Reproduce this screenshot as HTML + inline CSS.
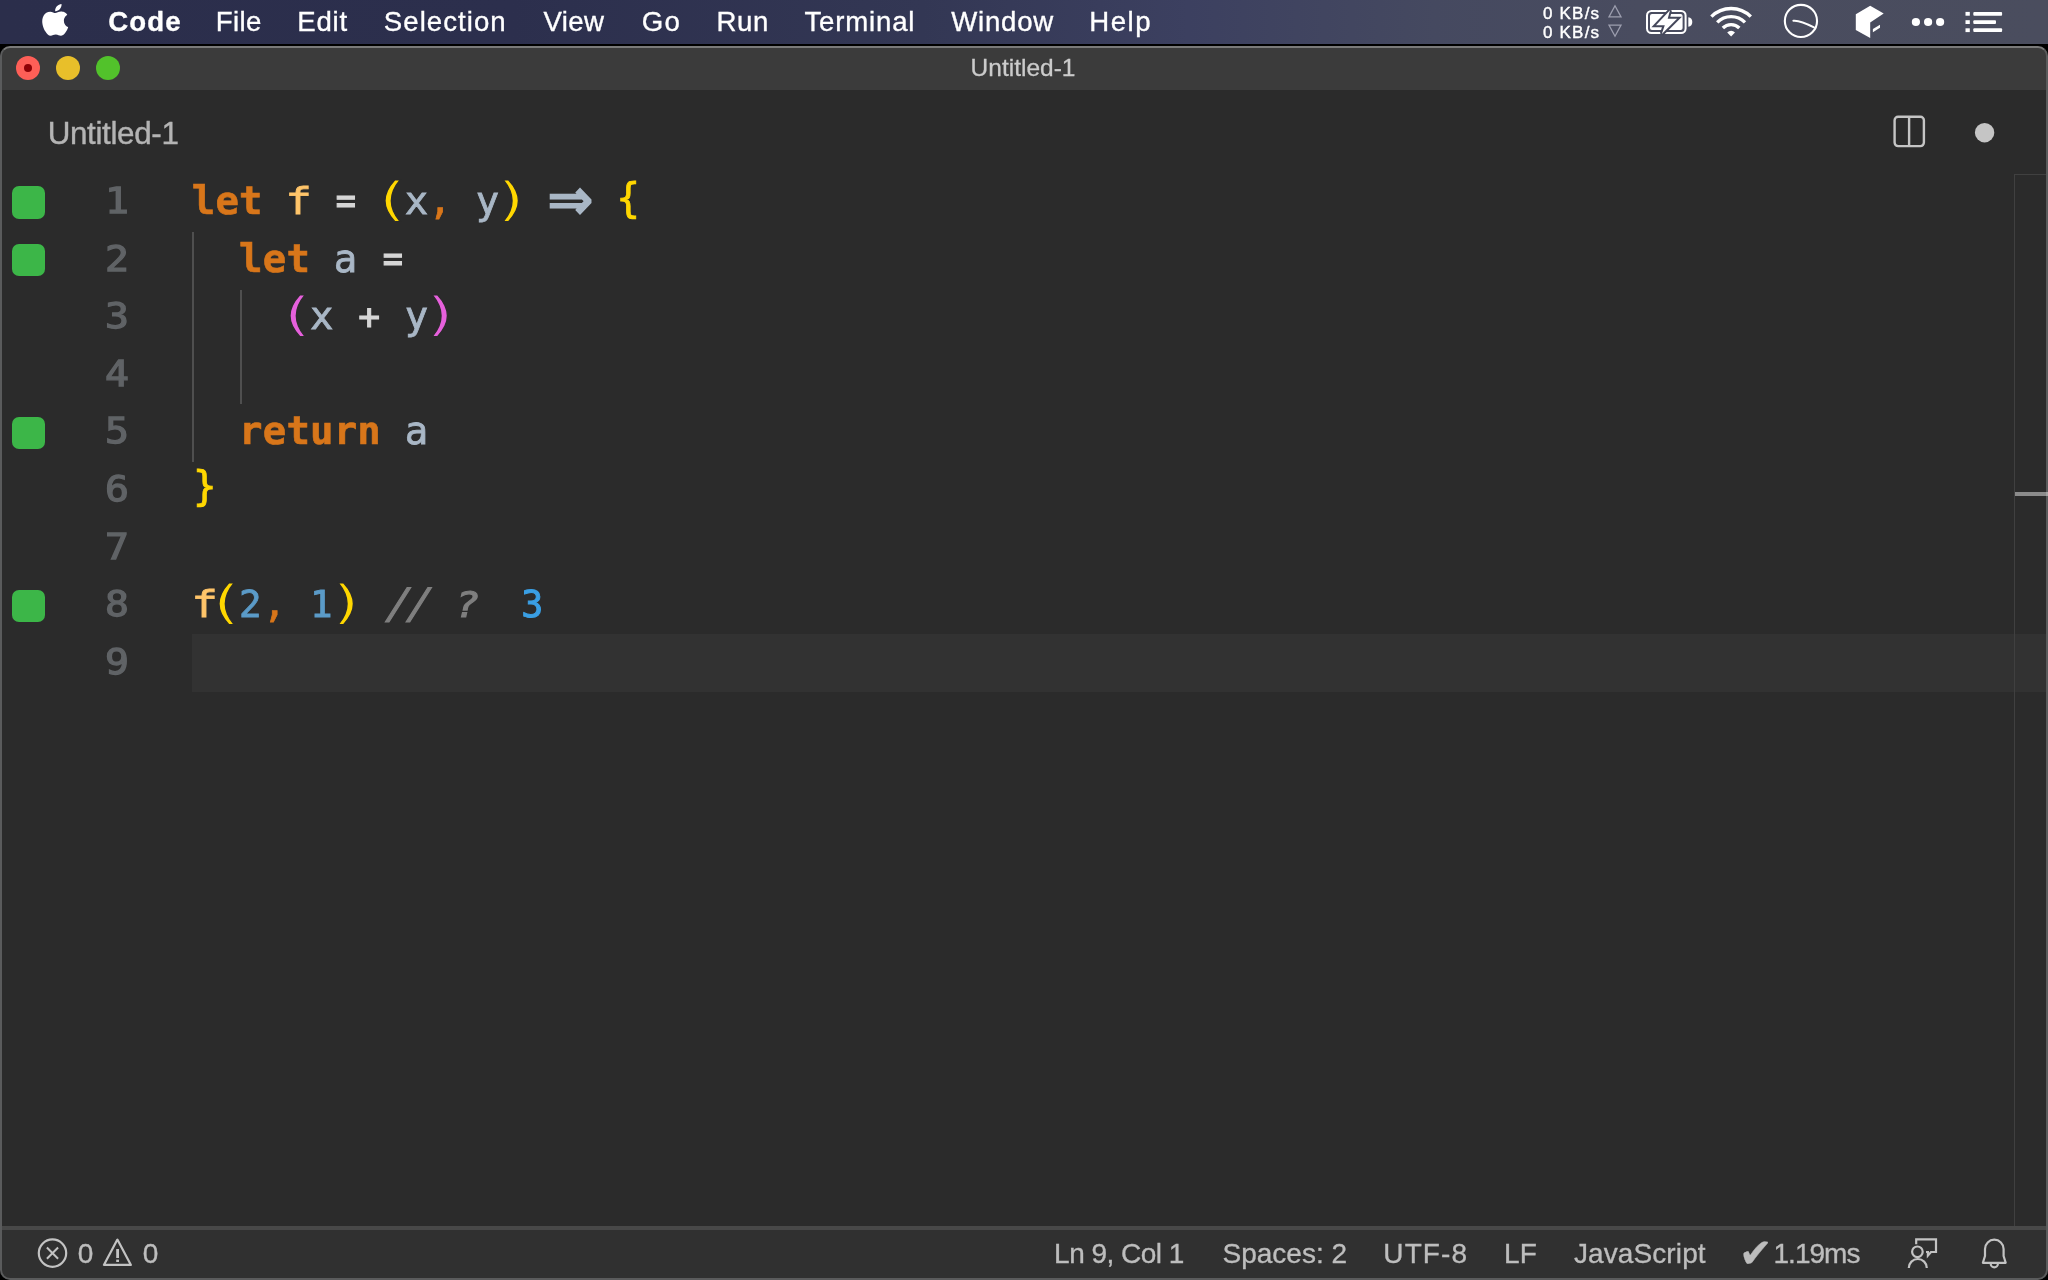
<!DOCTYPE html>
<html lang="en">
<head>
<meta charset="utf-8">
<title>Untitled-1</title>
<style>
*{box-sizing:border-box;margin:0;padding:0}
html,body{width:2048px;height:1280px;overflow:hidden;background:#000}
body{position:relative;font-family:"Liberation Sans",sans-serif;color:#fff}
svg{position:absolute;left:0;top:0;overflow:visible}
/* ---------- menu bar ---------- */
#menubar{will-change:transform;position:absolute;left:0;top:0;width:2048px;height:44px;
  background:linear-gradient(90deg,#2b2e4b 0%,#2c2f4d 25%,#333754 45%,#3c4060 58%,#454960 70%,#494c5f 80%,#4a4d5e 100%)}
#menubar .mi{position:absolute;top:0;height:44px;line-height:44px;font-size:27.6px;color:#fff;white-space:pre;-webkit-text-stroke:0.35px #fff}
#menubar .mi.b{font-weight:bold}
.net{position:absolute;left:1543px;font-size:17px;letter-spacing:1.2px;-webkit-text-stroke:0.4px #fff;line-height:20px;height:20px;color:#fff;white-space:pre}
/* ---------- window ---------- */
#win{position:absolute;left:0;top:46px;width:2048px;height:1234px;background:#2b2b2b;border-radius:10px;overflow:hidden}
#pg{will-change:transform;position:absolute;left:0;top:-46px;width:2048px;height:1280px}
#frame{position:absolute;left:0;top:0;width:2048px;height:1234px;border:2px solid #5a5b5c;border-top-color:#7a7a7a;border-radius:10px}
#titlebar{position:absolute;left:0;top:46px;width:2048px;height:44px;background:#3b3b3b}
#title{position:absolute;left:0;width:2046px;top:46px;height:43px;line-height:43px;text-align:center;font-size:24.5px;color:#cbcbcb;-webkit-text-stroke:0.3px #cbcbcb}
.tl{position:absolute;top:56px;width:24px;height:24px;border-radius:50%}
/* ---------- tab ---------- */
#tab{position:absolute;left:47.7px;top:109.9px;height:48px;line-height:48px;font-size:31.4px;letter-spacing:-0.35px;color:#b4b4b4;white-space:pre;-webkit-text-stroke:0.4px #b4b4b4}
/* ---------- editor ---------- */
.sq{position:absolute;left:12.3px;width:32.5px;height:32.4px;border-radius:7px;background:#3cb648}
.ln{position:absolute;left:60px;width:69px;transform:scaleX(1.1);transform-origin:100% 50%;text-align:right;height:57.6px;line-height:57.6px;margin-top:-1.8px;
  font-family:"DejaVu Sans Mono","Liberation Mono",monospace;font-size:36.2px;color:#606366;-webkit-text-stroke:1.3px #606366}
.code{position:absolute;left:191.8px;height:57.6px;line-height:57.6px;white-space:pre;margin-top:-1.8px;
  font-family:"DejaVu Sans Mono","Liberation Mono",monospace;font-size:39px;letter-spacing:0.17px;color:#a9b7c6;-webkit-text-stroke:0.8px}
.k{color:#d8761a;font-weight:bold;-webkit-text-stroke:0.6px}
.fn{color:#ffc56a;display:inline-block;transform:scale(1.12,0.955);transform-origin:15% 71.5%}
.op{color:#d6d6d6;display:inline-block;transform:translateY(-0.3px) scale(0.86,1);-webkit-text-stroke:1.2px}
.pls{color:#d6d6d6;display:inline-block;transform:translate(0.5px,0.6px) scale(0.93,0.93);-webkit-text-stroke:1.2px}
.y{color:#ffd700}
.p{color:#e660dc}
.pl,.pr{display:inline-block;transform-origin:50% 50%;-webkit-text-stroke:0.8px #2b2b2b}
.pl{transform:translate(-1.6px,-1.2px) scale(1.72,1.19)}
.pr{transform:translate(1.4px,-1.2px) scale(1.72,1.19)}
.br{display:inline-block;transform-origin:50% 50%;transform:translate(-0.8px,-1.9px) scale(1,1.03)}
.br2{display:inline-block;transform-origin:50% 50%;transform:translate(1.3px,-1.9px) scale(1,1.03)}
.c{color:#d8761a}
.n{color:#5b9bc8;font-size:37.5px;letter-spacing:1.07px}
.cm{color:#7f7f7f;font-style:italic}
.sl{display:inline-block;margin-left:5.8px;letter-spacing:-2.8px;margin-right:3.2px;transform:skewX(-9deg) scaleY(1.07);transform-origin:50% 60%;-webkit-text-stroke:1.2px}
.q{display:inline-block;transform:translateX(0.5px) scale(1.04,0.92);transform-origin:50% 71.5%;-webkit-text-stroke:1.3px}
.r{color:#3a9fe4;margin-left:42.5px;font-size:36.6px;letter-spacing:1.07px;-webkit-text-stroke:1px}
.arw{display:inline-block;width:47.13px;height:40px;vertical-align:baseline;position:relative}
.arwi{position:absolute;left:1.2px;top:6.4px;font-family:"DejaVu Sans",sans-serif;font-size:54px;letter-spacing:0;-webkit-text-stroke:2.2px;line-height:40px;transform-origin:50% 50%;transform:scaleY(1.05)}
.guide{position:absolute;width:2px;background:#4f4f4f}
#curline{position:absolute;left:192px;top:634px;width:1854px;height:58px;background:#323232}
#rulerL{position:absolute;left:2014px;top:174px;width:1px;height:1053px;background:#404040}
#rulerT{position:absolute;left:2014px;top:174px;width:32px;height:1px;background:#404040}
#rmark{position:absolute;left:2015px;top:492px;width:33px;height:4px;background:#8b8b8b}
/* ---------- status bar ---------- */
#status{position:absolute;left:0;top:1226px;width:2048px;height:54px;background:#303030;border-top:4px solid #484848}
.si{position:absolute;top:1228.4px;height:51px;line-height:51px;font-size:28px;letter-spacing:-0.4px;color:#bdbdbd;white-space:pre;-webkit-text-stroke:0.35px #bdbdbd}
</style>
</head>
<body>
<div id="menubar">
  <svg width="2048" height="44" viewBox="0 0 2048 44">
    <!-- apple -->
    <g transform="translate(39.3,3.9) scale(1.325)" fill="#fff"><path d="M12.152 6.896c-.948 0-2.415-1.078-3.96-1.04-2.04.027-3.91 1.183-4.961 3.014-2.117 3.675-.546 9.103 1.519 12.09 1.013 1.454 2.208 3.09 3.792 3.039 1.52-.065 2.09-.987 3.935-.987 1.831 0 2.35.987 3.96.948 1.637-.026 2.676-1.48 3.676-2.948 1.156-1.688 1.636-3.325 1.662-3.415-.039-.013-3.182-1.221-3.22-4.857-.026-3.04 2.48-4.494 2.597-4.559-1.429-2.09-3.623-2.324-4.39-2.376-2-.156-3.675 1.09-4.61 1.09zM15.53 3.83c.843-1.012 1.4-2.427 1.245-3.83-1.207.052-2.662.805-3.532 1.818-.78.896-1.454 2.338-1.273 3.714 1.338.104 2.715-.688 3.559-1.701"/></g>
    <!-- net arrows -->
    <polygon points="1615,5.8 1609,16.9 1621,16.9" fill="none" stroke="#9c9eae" stroke-width="1.3"/>
    <polygon points="1609,25.1 1621,25.1 1615,36.2" fill="none" stroke="#9c9eae" stroke-width="1.3"/>
    <!-- battery -->
    <rect x="1647" y="11" width="38.6" height="22" rx="4.5" fill="none" stroke="#fff" stroke-width="2"/>
    <rect x="1650" y="14" width="32.6" height="16" rx="2" fill="#fff"/>
    <path d="M1688.3 17.2q4 .6 4 4.8t-4 4.8z" fill="#fff"/>
    <polygon points="1670,10.3 1656,25.2 1664.8,25.2 1661.8,34 1677.1,18.8 1667.7,18.8" fill="#fff" stroke="#44475a" stroke-width="4" stroke-linejoin="miter"/>
    <polygon points="1670,10.3 1656,25.2 1664.8,25.2 1661.8,34 1677.1,18.8 1667.7,18.8" fill="#fff"/>
    <!-- wifi -->
    <g fill="none" stroke="#fff" stroke-width="3.4">
      <path d="M1711.41 16.61A27.85 27.85 0 0 1 1750.79 16.61"/>
      <path d="M1717.21 22.41A19.65 19.65 0 0 1 1744.99 22.41"/>
      <path d="M1722.86 28.06A11.65 11.65 0 0 1 1739.34 28.06"/>
    </g>
    <path d="M1731.1 36.4L1727.21 32.41A5.5 5.5 0 0 1 1734.99 32.41z" fill="#fff"/>
    <!-- clock -->
    <circle cx="1800.95" cy="20.95" r="16.1" fill="none" stroke="#fff" stroke-width="2.1"/>
    <path d="M1793.4 20.7Q1800 20 1814 27.4" fill="none" stroke="#fff" stroke-width="2" stroke-linecap="round"/>
    <!-- cube -->
    <polygon points="1855.8,14.3 1870.2,5.7 1883.7,13.6 1870.2,22.4 1870.2,38 1855.8,29.9" fill="#fff"/>
    <polygon points="1872.9,28.9 1880,24.8 1880,27.8 1872.9,32.2" fill="#fff"/>
    <!-- dots -->
    <circle cx="1915.9" cy="22" r="4.1" fill="#fff"/><circle cx="1928.1" cy="22" r="4.1" fill="#fff"/><circle cx="1940.1" cy="22" r="4.1" fill="#fff"/>
    <!-- list -->
    <g fill="#fff">
      <rect x="1965.5" y="11.9" width="4.3" height="3.8"/><rect x="1973.3" y="11.9" width="28.8" height="3.8" rx="1"/>
      <rect x="1965.5" y="20.2" width="4.3" height="3.8"/><rect x="1973.3" y="20.2" width="22.7" height="3.8" rx="1"/>
      <rect x="1965.5" y="28.3" width="4.3" height="3.8"/><rect x="1973.3" y="28.3" width="28.8" height="3.8" rx="1"/>
    </g>
  </svg>
  <span class="mi b" style="left:108.2px;letter-spacing:1.1px">Code</span>
  <span class="mi" style="left:215.8px;letter-spacing:0.4px">File</span>
  <span class="mi" style="left:297.2px;letter-spacing:0.8px">Edit</span>
  <span class="mi" style="left:383.8px;letter-spacing:1.05px">Selection</span>
  <span class="mi" style="left:543.6px;letter-spacing:0.33px">View</span>
  <span class="mi" style="left:641.8px;letter-spacing:1.2px">Go</span>
  <span class="mi" style="left:716.4px;letter-spacing:0.65px">Run</span>
  <span class="mi" style="left:804.4px;letter-spacing:0.83px">Terminal</span>
  <span class="mi" style="left:951.2px;letter-spacing:0.78px">Window</span>
  <span class="mi" style="left:1089.2px;letter-spacing:1.53px">Help</span>
  <span class="net" style="top:4.2px">0 KB/s</span>
  <span class="net" style="top:22.7px">0 KB/s</span>
</div>
<div id="win"><div id="pg">
  <div id="titlebar"></div>
  <div class="tl" style="left:16px;background:#fe5f57"></div>
  <div class="tl" style="left:24px;top:64px;width:8px;height:8px;background:#8e0206"></div>
  <div class="tl" style="left:56px;background:#e8bf2a"></div>
  <div class="tl" style="left:96px;background:#52c22b"></div>
  <div id="title">Untitled-1</div>
  <div id="tab">Untitled-1</div>
  <svg width="2048" height="1280" viewBox="0 0 2048 1280">
    <!-- split editor + dirty dot -->
    <rect x="1894.6" y="116.8" width="29.3" height="29.3" rx="3.5" fill="none" stroke="#c5c5c5" stroke-width="2.4"/>
    <line x1="1909.1" y1="116.8" x2="1909.1" y2="146.1" stroke="#c5c5c5" stroke-width="2.4"/>
    <circle cx="1984.6" cy="132.7" r="9.7" fill="#c5c5c5"/>
  </svg>
  <div id="curline"></div>
<div class="sq" style="top:186.4px"></div><div class="ln" style="top:173.8px">1</div><div class="code" style="top:173.8px"><span class="k">let</span> <span class="fn">f</span> <span class="op">=</span> <span class="y pl">(</span>x<span class="c">,</span> y<span class="y pr">)</span> <span class="arw"><span class="arwi">⇒</span></span> <span class="y br">{</span></div>
<div class="sq" style="top:244.0px"></div><div class="ln" style="top:231.4px">2</div><div class="code" style="top:231.4px">  <span class="k">let</span> a <span class="op">=</span></div>
<div class="ln" style="top:289.0px">3</div><div class="code" style="top:289.0px">    <span class="p pl">(</span>x <span class="pls">+</span> y<span class="p pr">)</span></div>
<div class="ln" style="top:346.6px">4</div>
<div class="sq" style="top:416.8px"></div><div class="ln" style="top:404.2px">5</div><div class="code" style="top:404.2px">  <span class="k">return</span> a</div>
<div class="ln" style="top:461.8px">6</div><div class="code" style="top:461.8px"><span class="y br2">}</span></div>
<div class="ln" style="top:519.4px">7</div>
<div class="sq" style="top:589.6px"></div><div class="ln" style="top:577.0px">8</div><div class="code" style="top:577.0px"><span class="fn">f</span><span class="y pl">(</span><span class="n">2</span><span class="c">,</span> <span class="n">1</span><span class="y pr">)</span> <span class="cm"><span class="sl">//</span> <span class="q">?</span></span><span class="r">3</span></div>
<div class="ln" style="top:634.6px">9</div>
  <div class="guide" style="left:192px;top:232px;height:230px"></div>
  <div class="guide" style="left:240px;top:290px;height:114px"></div>
  <div id="rulerL"></div><div id="rulerT"></div><div id="rmark"></div>
  <div id="status"></div>
  <svg width="2048" height="1280" viewBox="0 0 2048 1280" fill="none" stroke="#c3c3c3" stroke-width="2.2">
    <!-- error -->
    <circle cx="52.5" cy="1253.1" r="13.7"/>
    <path d="M46.9 1247.5L58.1 1258.7M58.1 1247.5L46.9 1258.7" stroke-width="2"/>
    <!-- warning -->
    <polygon points="117.4,1239.6 103.9,1264.9 130.9,1264.9" stroke-linejoin="round"/>
    <rect x="116.2" y="1249" width="2.8" height="9" fill="#c3c3c3" stroke="none"/>
    <rect x="116.2" y="1259.6" width="2.8" height="2.4" fill="#c3c3c3" stroke="none"/>
    <!-- feedback -->
    <path d="M1916.2 1244.3V1239.4H1936V1252H1931L1927.9 1255.6V1252H1926"/>
    <circle cx="1917.4" cy="1251.8" r="5.3"/>
    <path d="M1908.8 1268A9 9 0 0 1 1926.8 1268"/>
    <!-- bell -->
    <path d="M1982.9 1262.8L1985 1256V1249A9.3 9.3 0 0 1 2003.6 1249V1256L2005.7 1262.8Z" stroke-linejoin="round"/>
    <path d="M1990.7 1263.8A3.6 3.6 0 0 0 1997.9 1263.8"/>
  </svg>
  <span class="si" style="left:77.8px">0</span>
  <span class="si" style="left:142.8px">0</span>
  <span class="si" style="left:1054.1px;letter-spacing:-0.51px">Ln 9, Col 1</span>
  <span class="si" style="left:1222.5px;letter-spacing:0">Spaces: 2</span>
  <span class="si" style="left:1383.3px;letter-spacing:1.12px">UTF-8</span>
  <span class="si" style="left:1503.9px;letter-spacing:0.3px">LF</span>
  <span class="si" style="left:1573.9px;letter-spacing:0.11px">JavaScript</span>
  <span class="si" style="left:1739.4px;font-size:39.5px;letter-spacing:0;top:1227.6px">✔</span><span class="si" style="left:1773.5px;letter-spacing:-0.98px">1.19ms</span>
</div><div id="frame"></div><div style="position:absolute;left:2046px;top:446px;width:2px;height:4px;background:#a2a2a2"></div></div>
</body>
</html>
